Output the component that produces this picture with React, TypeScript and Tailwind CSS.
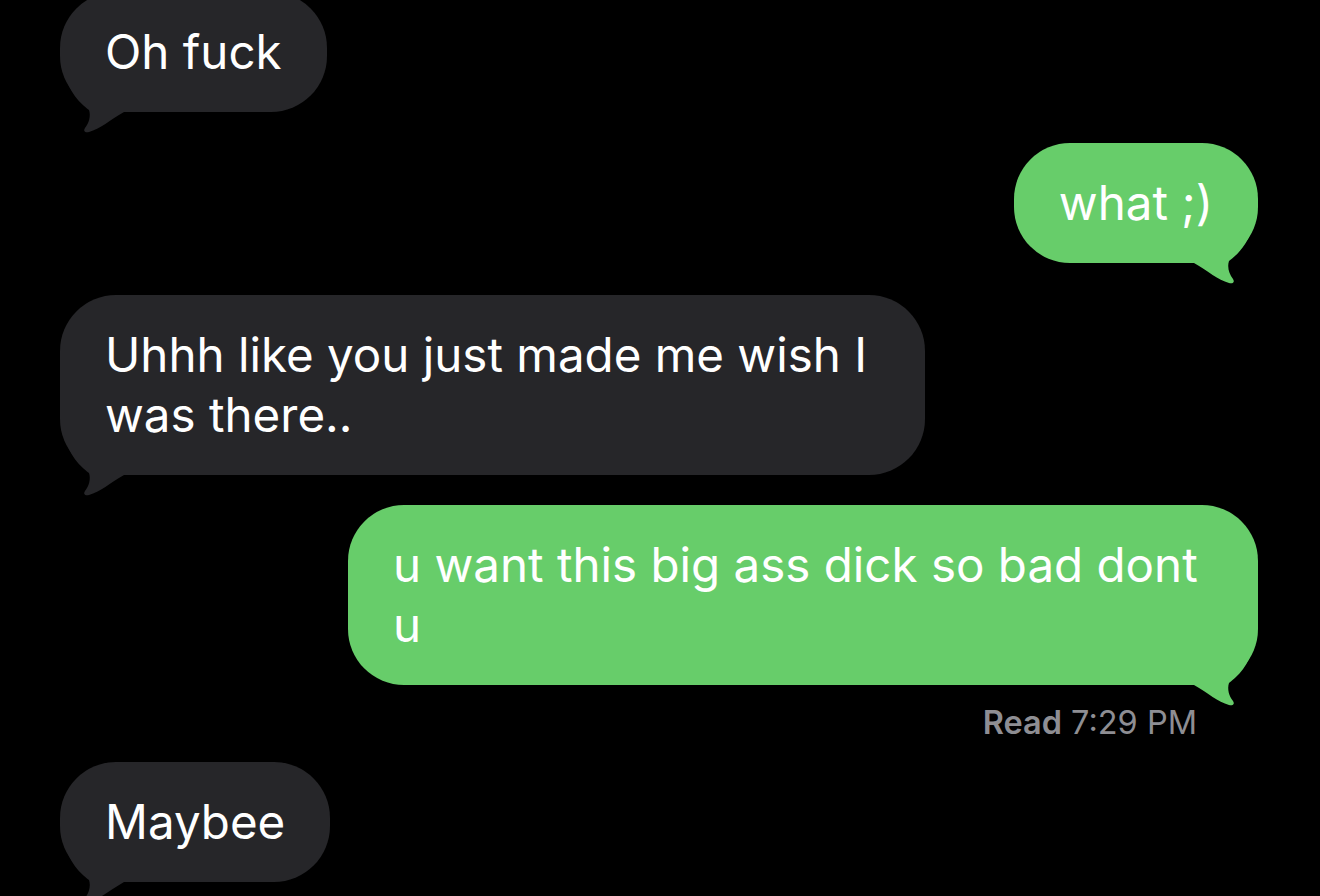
import React from "react";

const TAIL =
  "M4 -40 C 10 -16, 24 -6, 29 -2 C 31 4, 29 11, 25 16 C 23 19, 25 21, 29 20 C 40 17, 50 8, 64 0 L 64 -40 Z";

function Tail({ side, color }: { side: "left" | "right"; color: string }) {
  return (
    <svg
      width="70"
      height="64"
      viewBox="0 -40 70 64"
      className={
        side === "left"
          ? "absolute left-0 bottom-[-24px]"
          : "absolute right-0 bottom-[-24px] scale-x-[-1]"
      }
    >
      <path d={TAIL} fill={color} />
    </svg>
  );
}

function Bubble({
  side,
  children,
  className = "",
}: {
  side: "left" | "right";
  children: React.ReactNode;
  className?: string;
}) {
  const color = side === "left" ? "#262629" : "#67cd6a";
  return (
    <div
      className={
        "relative rounded-[56px] px-[45px] py-[30px] text-white text-[47.5px] leading-[60px] " +
        (side === "left" ? "bg-[#262629] self-start " : "bg-[#67cd6a] self-end ") +
        className
      }
    >
      <Tail side={side} color={color} />
      <div className="relative">{children}</div>
    </div>
  );
}

export default function App() {
  return (
    <div
      className="w-[1320px] h-[896px] overflow-hidden bg-black"
      style={{ fontFamily: "Inter, 'Noto Sans', sans-serif" }}
    >
      <div className="flex flex-col pl-[60px] pr-[62px] mt-[-8px]">
        <Bubble side="left">Oh fuck</Bubble>
        <Bubble side="right" className="mt-[31px]">
          what ;)
        </Bubble>
        <Bubble side="left" className="mt-[32px] w-[865px]">
          Uhhh like you just made me wish I<br />was there..
        </Bubble>
        <Bubble side="right" className="mt-[30px] w-[910px]">
          u want this big ass dick so bad dont
          <br />u
        </Bubble>
        <div className="self-end mr-[61px] mt-[20px] text-[32.5px] leading-[36px] text-[#8e8e93]">
          <span className="font-semibold">Read</span> 7:29 PM
        </div>
        <Bubble side="left" className="mt-[21px]">
          Maybee
        </Bubble>
      </div>
    </div>
  );
}
